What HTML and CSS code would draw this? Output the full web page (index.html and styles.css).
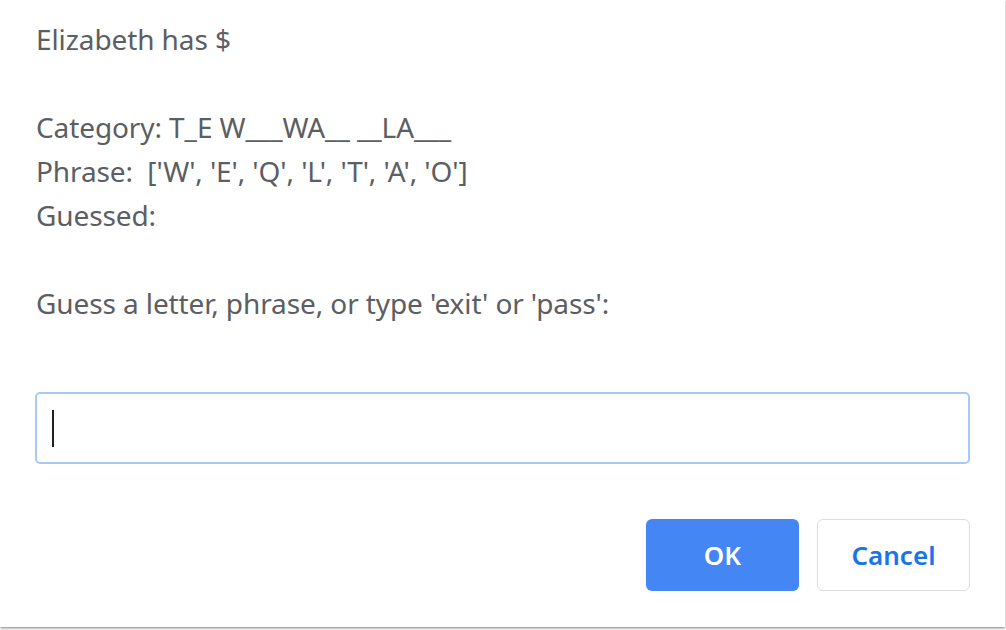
FILE: index.html
```html
<!DOCTYPE html>
<html>
<head>
<meta charset="utf-8">
<link rel="stylesheet" href="styles.css">
</head>
<body>
<div class="dialog">
  <div class="message">
    <div class="line">Elizabeth has $</div>
    <div class="line blank"></div>
    <div class="line">Category: T_E W___WA__ __LA___</div>
    <div class="line">Phrase:&nbsp; ['W', 'E', 'Q', 'L', 'T', 'A', 'O']</div>
    <div class="line">Guessed:</div>
    <div class="line blank"></div>
    <div class="line">Guess a letter, phrase, or type 'exit' or 'pass':</div>
  </div>
  <div class="field"><span class="caret"></span></div>
  <div class="actions">
    <button class="btn primary">OK</button>
    <button class="btn secondary">Cancel</button>
  </div>
</div>
</body>
</html>
```
FILE: styles.css
```css
html, body {
  margin: 0;
  padding: 0;
  background: #ffffff;
}
body {
  width: 1006px;
  height: 630px;
  overflow: hidden;
}
.dialog {
  width: 1005px;
  height: 627px;
  box-sizing: border-box;
  background: #ffffff;
  box-shadow: 0 1px 2px rgba(0,0,0,0.35), 0 2px 3px rgba(0,0,0,0.15);
  padding: 17px 35px 0 36px;
  font-family: "Noto Sans", "Open Sans", sans-serif;
  display: flex;
  flex-direction: column;
}
.dialog > * {
  flex-shrink: 0;
}
.message {
  color: #5b5e62;
  font-size: 28px;
  line-height: 44px;
  letter-spacing: -0.1px;
}
.line.blank {
  height: 44px;
}
.field {
  margin: 67px 0 0 -1px;
  height: 72px;
  box-sizing: border-box;
  border: 2px solid #a8c7fa;
  border-radius: 5px;
  display: flex;
  align-items: center;
  padding-left: 15px;
}
.caret {
  width: 2px;
  height: 37px;
  background: #202124;
}
.actions {
  margin-top: 55px;
  display: flex;
  justify-content: flex-end;
  gap: 18px;
}
.btn {
  width: 153px;
  height: 72px;
  border-radius: 6px;
  font-family: "Noto Sans", "Open Sans", sans-serif;
  font-size: 26px;
  font-weight: 600;
  cursor: pointer;
  box-sizing: border-box;
}
.primary {
  background: #4486f4;
  color: #ffffff;
  border: none;
}
.secondary {
  background: #ffffff;
  color: #1a73e8;
  border: 1px solid #dadce0;
}
```
